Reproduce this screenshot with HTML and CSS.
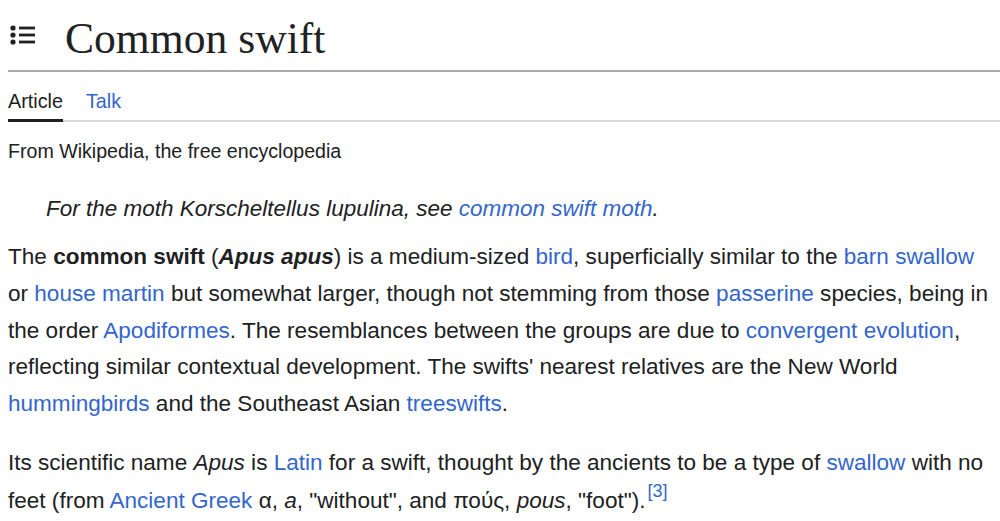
FILE: index.html
```html
<!DOCTYPE html>
<html lang="en">
<head>
<meta charset="utf-8">
<title>Common swift</title>
<link rel="stylesheet" href="styles.css">
</head>
<body>
<div class="page">
  <header class="title-bar">
    <button class="toc-btn" aria-label="Contents">
      <svg width="26" height="22" viewBox="0 0 26 22">
        <circle cx="3" cy="4" r="2.6" fill="#202122"/>
        <circle cx="3" cy="11" r="2.6" fill="#202122"/>
        <circle cx="3" cy="18" r="2.6" fill="#202122"/>
        <rect x="9" y="2.6" width="16" height="2.8" fill="#202122"/>
        <rect x="9" y="9.6" width="16" height="2.8" fill="#202122"/>
        <rect x="9" y="16.6" width="16" height="2.8" fill="#202122"/>
      </svg>
    </button>
    <h1 class="title">Common swift</h1>
  </header>
  <nav class="tabs">
    <a class="tab active">Article</a>
    <a class="tab">Talk</a>
  </nav>
  <div class="tagline">From Wikipedia, the free encyclopedia</div>
  <div class="hatnote">For the moth <i>Korscheltellus lupulina</i>, see <a class="link">common swift moth</a>.</div>
  <p class="para">The <b>common swift</b> (<b><i>Apus apus</i></b>) is a medium-sized <a class="link">bird</a>, superficially similar to the <a class="link">barn swallow</a> or <a class="link">house martin</a> but somewhat larger, though not stemming from those <a class="link">passerine</a> species, being in the order <a class="link">Apodiformes</a>. The resemblances between the groups are due to <a class="link">convergent evolution</a>, reflecting similar contextual development. The swifts' nearest relatives are the New World <a class="link">hummingbirds</a> and the Southeast Asian <a class="link">treeswifts</a>.</p>
  <p class="para">Its scientific name <i>Apus</i> is <a class="link">Latin</a> for a swift, thought by the ancients to be a type of <a class="link">swallow</a> with no feet (from <a class="link">Ancient Greek</a> α, <i>a</i>, "without", and πούς, <i>pous</i>, "foot").<sup class="ref"><a class="link">[3]</a></sup></p>
</div>
</body>
</html>
```

FILE: styles.css
```css
html, body {
  margin: 0;
  padding: 0;
  background: #ffffff;
}
body {
  font-family: "Liberation Sans", Arial, sans-serif;
  color: #202122;
}
.page {
  padding: 0 0 0 8px;
}
.title-bar {
  display: flex;
  align-items: center;
  height: 70px;
  border-bottom: 2px solid #a7a9ad;
}
.toc-btn {
  border: 0;
  background: none;
  padding: 0;
  margin: 0 0 0 2px;
  width: 26px;
  height: 22px;
  display: flex;
}
.title {
  margin: 0 0 0 29px;
  font-family: "Liberation Serif", "Times New Roman", serif;
  font-weight: normal;
  font-size: 43.6px;
  line-height: 1;
  color: #202122;
  padding-top: 8px;
}
.tabs {
  display: flex;
  gap: 23px;
  border-bottom: 2px solid #d6d8db;
  margin-top: 17px;
}
.tab {
  font-size: 19.8px;
  line-height: 24px;
  padding-bottom: 6px;
  color: #3366cc;
  margin-bottom: -2px;
  border-bottom: 3px solid transparent;
}
.tab.active {
  color: #202122;
  border-bottom-color: #202122;
}
.tagline {
  font-size: 19.6px;
  line-height: 22px;
  margin-top: 18px;
}
.hatnote {
  font-style: italic;
  font-size: 22.5px;
  line-height: 30px;
  margin: 32px 0 0 38px;
}
.para {
  font-size: 22.55px;
  line-height: 36.75px;
  margin: 15px 0 0 0;
  padding-right: 0;
}
.para + .para {
  margin-top: 22px;
}
.link {
  color: #3366cc;
  text-decoration: none;
}
.ref {
  font-size: 18px;
  line-height: 1;
  vertical-align: 11px;
  margin-left: 2px;
}
```
